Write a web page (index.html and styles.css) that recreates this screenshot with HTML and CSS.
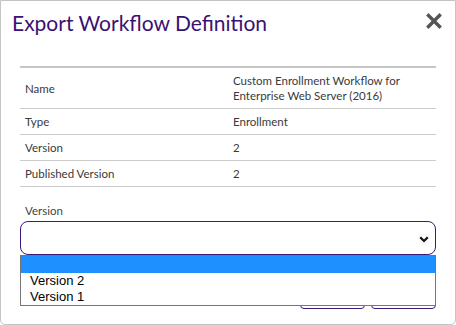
FILE: index.html
```html
<!DOCTYPE html>
<html lang="en">
<head>
  <meta charset="UTF-8">
  <title>Export Workflow Definition</title>
  <link rel="stylesheet" href="styles.css">
</head>
<body>
  <div class="modal">
    <div class="modal-header">
      <h2 class="modal-title">Export Workflow Definition</h2>
      <span class="close">
        <svg width="16" height="16" viewBox="0 0 16 16">
          <path d="M2.5 2.5 L13.5 13.5 M13.5 2.5 L2.5 13.5" stroke="#555" stroke-width="3.4" stroke-linecap="square" fill="none"/>
        </svg>
      </span>
    </div>

    <div class="modal-body">
      <table class="details">
        <tbody>
          <tr>
            <td>Name</td>
            <td>Custom Enrollment Workflow for Enterprise Web Server (2016)</td>
          </tr>
          <tr>
            <td>Type</td>
            <td>Enrollment</td>
          </tr>
          <tr>
            <td>Version</td>
            <td>2</td>
          </tr>
          <tr>
            <td>Published Version</td>
            <td>2</td>
          </tr>
        </tbody>
      </table>

      <label class="field-label">Version</label>
      <div class="field">
        <div class="select">
          <span class="select-value"></span>
          <svg class="chevron" width="10" height="7" viewBox="0 0 10 7">
            <polyline points="1.2,1.2 5,5 8.8,1.2" stroke="#111" stroke-width="2.2" fill="none"/>
          </svg>
        </div>
        <ul class="options">
          <li class="selected"></li>
          <li>Version 2</li>
          <li>Version 1</li>
        </ul>
      </div>

      <div class="actions">
        <button class="btn">Cancel</button>
        <button class="btn">Export</button>
      </div>
    </div>
  </div>
</body>
</html>
```

FILE: styles.css
```css
body {
  margin: 0;
  font-family: Lato, "Open Sans", sans-serif;
  background: #fff;
}

.modal {
  box-sizing: border-box;
  width: 456px;
  height: 325px;
  border: 1px solid #c4c4c4;
  border-radius: 0 0 5px 5px;
  background: #fff;
}

.modal-header {
  display: flex;
  justify-content: space-between;
  align-items: flex-start;
  padding: 9px 13px 0 11px;
}
.modal-title {
  margin: 0;
  font-size: 21px;
  line-height: 25px;
  font-weight: 400;
  color: #3a1272;
}
.close {
  display: block;
  margin-top: 3px;
  width: 16px;
  height: 16px;
}

.modal-body {
  padding: 31px 19px 0 19px;
}

table.details {
  width: 100%;
  border-collapse: collapse;
  border-top: 2px solid #c6c6c6;
  font-size: 11.5px;
  line-height: 15px;
  color: #3a3a3a;
}
table.details td {
  width: 50%;
  padding: 5px 5px;
  border-bottom: 1px solid #cbcbcb;
  vertical-align: middle;
}

.field-label {
  display: block;
  margin-top: 16px;
  font-size: 11.5px;
  line-height: 15px;
  color: #444;
  padding-left: 5px;
}

.field {
  position: relative;
  margin-top: 3px;
}
.select {
  box-sizing: border-box;
  height: 34px;
  border: 1px solid #3d1a78;
  border-radius: 8px;
  display: flex;
  align-items: center;
  justify-content: space-between;
  padding: 0 6px 0 10px;
}
.chevron {
  display: block;
  margin-top: 2px;
}

/* open dropdown list lies over the buttons */
.options {
  position: absolute;
  top: 100%;
  left: 0;
  right: 0;
  margin: 0;
  padding: 0;
  list-style: none;
  border: 1px solid #767676;
  background: #fff;
  font-family: "Liberation Sans", Arial, sans-serif;
  font-size: 13px;
  color: #000;
  z-index: 2;
}
.options li {
  height: 16px;
  line-height: 16px;
  padding-left: 9px;
}
.options li:first-child {
  height: 17px;
}
.options li.selected {
  background: #1e90ff;
}

.actions {
  display: flex;
  justify-content: flex-end;
  gap: 6px;
  margin-top: 24px;
}
.btn {
  box-sizing: border-box;
  width: 65px;
  height: 30px;
  border: 1px solid #3d1a78;
  border-radius: 4px;
  background: #fff;
  color: #3d1a78;
  font-family: Lato, sans-serif;
  font-size: 12px;
}
```
